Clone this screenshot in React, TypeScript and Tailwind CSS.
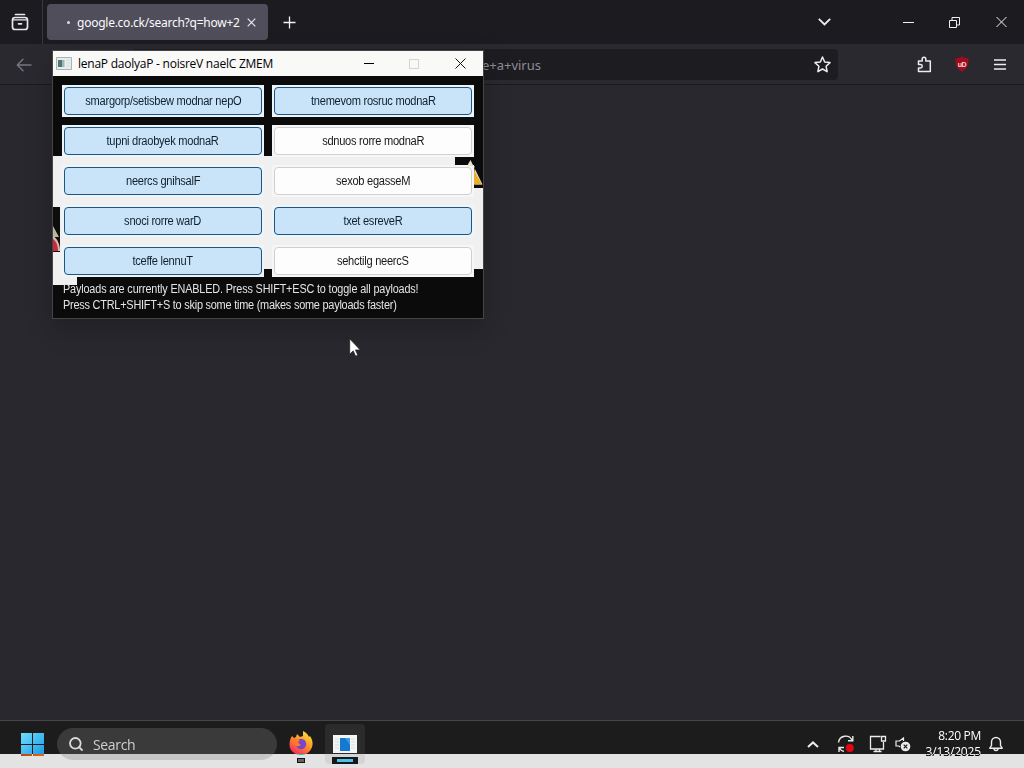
import React from 'react';
import { Search } from 'lucide-react';

type Payload = { label: string; active: boolean };

const payloads: Payload[] = [
  { label: 'smargorp/setisbew modnar nepO', active: true },
  { label: 'tnemevom rosruc modnaR', active: true },
  { label: 'tupni draobyek modnaR', active: true },
  { label: 'sdnuos rorre modnaR', active: false },
  { label: 'neercs gnihsalF', active: true },
  { label: 'sexob egasseM', active: false },
  { label: 'snoci rorre warD', active: true },
  { label: 'txet esreveR', active: true },
  { label: 'tceffe lennuT', active: true },
  { label: 'sehctilg neercS', active: false },
];

const TabStrip: React.FC = () => (
  <div className="flex h-11 items-center bg-[#1c1b20] text-[#fbfbfe]">
    <div className="flex h-full w-[43px] items-center justify-center border-r border-[#38373d] pr-[3px]">
      <svg width="18" height="18" viewBox="0 0 18 18" fill="none" stroke="#e8e8ee" strokeWidth="1.7" strokeLinecap="round">
        <path d="M4.5 1.500h9" />
        <rect x="1.500" y="4.500" width="15" height="12" rx="2.600" />
        <path d="M2 6.800h14" strokeWidth="1.200" />
        <path d="M7.500 10.800h3" />
      </svg>
    </div>
    <div className="ml-1 flex h-9 w-[221px] items-center rounded bg-[#504e5a]">
      <span className="ml-5 h-[3px] w-[3px] rounded-full bg-[#dcdce2]" />
      <span className="ml-[7px] w-[166px] whitespace-nowrap pt-px font-['Noto_Sans',sans-serif] text-[12px] tracking-[-0.25px]">
        google.co.ck/search?q=how+2
      </span>
      <svg className="ml-1" width="9" height="9" viewBox="0 0 9 9" stroke="#e8e8ee" strokeWidth="1.2">
        <path d="M.7.7l7.6 7.6M8.3.7L.7 8.3" />
      </svg>
    </div>
    <svg className="ml-[15px]" width="13" height="13" viewBox="0 0 13 13" stroke="#f2f2f6" strokeWidth="1.3">
      <path d="M6.5.5v12M.5 6.5h12" />
    </svg>
    <div className="ml-auto flex items-center">
      <svg className="mr-[72px]" width="13" height="8" viewBox="0 0 13 8" fill="none" stroke="#ececf1" strokeWidth="1.800">
        <path d="M.8.8l5.700 5.700L12.200.8" />
      </svg>
      <span className="mr-[35px] h-px w-[11px] bg-[#f0f0f4]" />
      <svg className="mr-[36px]" width="11" height="11" viewBox="0 0 11 11" fill="none" stroke="#f0f0f4">
        <path d="M.5 3.500h7v7h-7zM3 3V.5h7.500v7.500H8" />
      </svg>
      <svg className="mr-[17px]" width="11" height="12" viewBox="0 0 11 12" stroke="#f0f0f4" strokeWidth="1">
        <path d="M.5 1l10 10M10.500 1L.5 11" />
      </svg>
    </div>
  </div>
);

const NavBar: React.FC = () => (
  <div className="flex h-[41px] items-center border-b border-[#1b1a1f] bg-[#2a2930]">
    <svg className="ml-4 mt-px" width="16" height="14" viewBox="0 0 16 14" fill="none" stroke="#77767d" strokeWidth="1.4" strokeLinecap="round" strokeLinejoin="round">
      <path d="M15 7H1.500M7 1.300L1.300 7 7 12.700" />
    </svg>
    <div className="ml-[100px] flex h-[31px] w-[706px] items-center justify-end rounded bg-[#1d1c21] pr-[7px] pt-px">
      <span className="mr-[273px] pt-[3px] font-['Noto_Sans',sans-serif] text-[13px] text-[#8e8d94]">virus+on+my+machine+a+virus</span>
      <svg width="17" height="17" viewBox="0 0 17 17" fill="none" stroke="#ececf1" strokeWidth="1.500" strokeLinejoin="round">
        <path d="M8.500 1l2.200 5 5.300.6-3.900 3.700 1 5.400-4.600-2.700-4.600 2.700 1-5.400L1 6.600 6.300 6z" />
      </svg>
    </div>
    <svg className="ml-[79px]" width="15" height="17" viewBox="0 0 15 17" fill="none" stroke="#ececf1" strokeWidth="1.500" strokeLinejoin="round">
      <path d="M1.500 5h3.700V3a1.800 1.800 0 0 1 3.600 0v2h4.500V15.500H1.500v-3.500H3.500a1.700 1.700 0 0 0 0-3.400H1.500z" />
    </svg>
    <div className="relative ml-[22px] flex h-4 w-4 items-center justify-center">
      <svg className="absolute inset-0" width="16" height="16" viewBox="0 0 16 16" fill="#9d0d1b">
        <path d="M8 .3c2 1.400 4 1.900 6.500 2.100C14.800 8 13.500 12.500 8 15.800 2.500 12.500 1.200 8 1.500 2.400 4 2.200 6 1.700 8 .3z" />
      </svg>
      <span className="relative font-['Liberation_Sans',sans-serif] text-[7px] font-bold leading-none tracking-[-0.5px] text-[#ffd6d9]">uD</span>
    </div>
    <svg className="ml-6" width="12" height="11" viewBox="0 0 12 11" stroke="#ececf1" strokeWidth="1.400">
      <path d="M0 1h12M0 5.500h12M0 10h12" />
    </svg>
  </div>
);

const PayloadButton: React.FC<Payload> = ({ label, active }) => (
  <div className={`h-8 p-0.5 ${active ? 'bg-[#eef5fa]' : 'bg-[#f6f6f6]'}`}>
    <button
      className={`block h-7 w-full whitespace-nowrap rounded border text-center text-[12px] leading-[26px] tracking-[-0.3px] ${
        active ? 'border-[#1d5583] bg-[#c9e4f8] text-[#10202e]' : 'border-[#d0d0d0] bg-[#fdfdfd] text-[#181818]'
      }`}
    >
      <span className="inline-block scale-x-[0.925]">{label}</span>
    </button>
  </div>
);

const PayloadWindow: React.FC = () => (
  <div className="absolute left-[52px] top-[50px] h-[269px] w-[432px] border border-[#454545] bg-[#0b0b0b] font-['Liberation_Sans',sans-serif] shadow-[0_10px_26px_rgba(0,0,0,0.22)]">
    <div className="flex h-[25px] items-center bg-[#f9f9f8] text-black">
      <svg className="ml-[3px]" width="16" height="13" viewBox="0 0 16 13">
        <path d="M.5.5h15v12H.5z" fill="#e9ecec" stroke="#a9b3b3" />
        <path d="M2 3h5v7H2z" fill="#4f7775" />
        <path d="M6 3h2.500v7H6z" fill="#9eb9b6" />
        <path d="M11 3h3M11 6h3M11 9h3" stroke="#d3dada" />
      </svg>
      <span className="ml-[6px] whitespace-nowrap font-['Open_Sans',sans-serif] text-[12px] tracking-[-0.24px]">
        lenaP daolyaP - noisreV naelC ZMEM
      </span>
      <div className="ml-auto flex items-center">
        <span className="h-px w-[10px] bg-black" />
        <span className="ml-[35px] h-[10px] w-[10px] border border-[#d4d4d4]" />
        <svg className="ml-[36px] mr-[17px]" width="11" height="11" viewBox="0 0 11 11" stroke="#111">
          <path d="M.5.5l10 10M10.500.5L.5 10.500" />
        </svg>
      </div>
    </div>

    {/* patches where the client area has been repainted */}
    <div className="absolute left-0 top-[105px] h-[113px] w-full bg-[#f0f0f0]" />
    <div className="absolute left-0 top-[218px] h-4 w-6 bg-[#f0f0f0]" />
    <div className="absolute left-0 top-[156px] h-[45px] w-[7px] bg-[#0d0d0d]" />
    <div className="absolute left-[402px] top-[106px] h-2 w-7 bg-[#0b0b0b]" />
    <div className="absolute right-0 top-[105px] h-8 w-[9px] bg-[#0b0b0b]" />

    <div className="relative mt-[9px] grid grid-cols-[202px_202px] gap-2 pl-[9px]">
      {payloads.map((payload) => (
        <PayloadButton key={payload.label} {...payload} />
      ))}
    </div>
    <div className="absolute left-[402px] top-[106px] h-2 w-5 bg-[#0b0b0b]" />
    <div className="relative mt-1 whitespace-nowrap pl-[10px] text-[12px] leading-4 text-[#e4e4e4]">
      <p className="origin-left scale-x-[0.901] tracking-[-0.15px]">Payloads are currently ENABLED. Press SHIFT+ESC to toggle all payloads!</p>
      <p className="origin-left scale-x-[0.91] tracking-[-0.25px]">Press CTRL+SHIFT+S to skip some time (makes some payloads faster)</p>
    </div>

    {/* stray warning and error icons */}
    <svg className="absolute left-[413px] top-[108px]" width="17" height="30" viewBox="0 0 17 30">
      <path d="M8 26h9v2.500H8z" fill="#0b0b0b" />
      <path d="M4.500 1L1 7h7.500v18.500h8z" fill="#e8e4cf" />
      <path d="M8 11l8 14.500H8z" fill="#e6b02d" />
    </svg>
    <svg className="absolute left-0 top-[172px]" width="8" height="30" viewBox="0 0 8 30">
      <path d="M0 3l6 11H0z" fill="#b9b79c" />
      <path d="M0 13c4 2 7 8 7 15H0z" fill="#e0b5b5" />
      <path d="M0 16c3 2 5 6 5 12H0z" fill="#c12f3b" />
    </svg>
  </div>
);

const TrayIcons: React.FC = () => (
  <div className="flex h-[46px] items-center">
    <svg className="mr-[18px]" width="12" height="7" viewBox="0 0 12 7" fill="none" stroke="#ececec" strokeWidth="2">
      <path d="M1 6l5-4.600L11 6" />
    </svg>
    <svg className="mr-[14px]" width="18" height="18" viewBox="0 0 18 18" fill="none" stroke="#ececec" strokeWidth="1.400">
      <path d="M1.500 7.500A7.200 7.200 0 0 1 15 5M15.800 1v4.800H11M2 17v-4.500H7M2 12.500c1 2 3 3.500 5 3.900" />
      <circle cx="12.800" cy="13" r="4" fill="#e30613" stroke="none" />
    </svg>
    <svg className="mr-[8px]" width="18" height="18" viewBox="0 0 18 18" fill="none" stroke="#ececec" strokeWidth="1.300">
      <path d="M11.500 1.500H1.500v12.500H14.500V7M4.500 16.500h8M7 14v2.500M10.500 14v2.500M12.500 1.500h4v4.500h-4z" />
    </svg>
    <svg className="mr-[15px]" width="16" height="16" viewBox="0 0 16 16" fill="none" stroke="#ececec" strokeWidth="1.200">
      <path d="M8.500 5V2L4.500 5H1v5h3l1 1" />
      <circle cx="10.500" cy="10.500" r="4.800" fill="#ececec" stroke="none" />
      <path d="M8.700 8.700l3.600 3.600M12.300 8.700l-3.600 3.600" stroke="#1c1c1c" />
    </svg>
  </div>
);

const FirefoxIcon: React.FC = () => (
  <svg width="24" height="24" viewBox="0 0 24 24">
    <defs>
      <linearGradient id="flame" x1="0.8" y1="0" x2="0.2" y2="1">
        <stop offset="0" stopColor="#ffe63d" />
        <stop offset=".45" stopColor="#ff9626" />
        <stop offset="1" stopColor="#f3215c" />
      </linearGradient>
    </defs>
    <path d="M3 5l2 2 2-1 1-3 3 3 3-1V0c4 2 5 4 6 6l1-1c2 3 3 6 2.500 9C22.500 20 18 24 12 24 5.500 24 .5 19.500.5 13.500.5 10 1.500 7 3 5z" fill="url(#flame)" />
    <circle cx="12" cy="13" r="5.200" fill="#7a46c8" />
    <path d="M4 8c3-1 5-.5 7 2-2 0-2 1.500-1 2.500s1 1 2 .8c-1 2-4 2.700-6 .7C5 13 4 11 4 8z" fill="#ff7d2a" />
  </svg>
);

const Taskbar: React.FC = () => (
  <div className="relative isolate flex h-12 items-start overflow-hidden border-t border-[#46454a] bg-[#1c1c1c] font-['Open_Sans',sans-serif] text-white">
    <svg className="ml-[21px] mt-3" width="23" height="23" viewBox="0 0 23 23">
      <defs>
        <linearGradient id="logo" x1="0" y1="0" x2="1" y2="1">
          <stop offset="0" stopColor="#72dcfb" />
          <stop offset="1" stopColor="#159be6" />
        </linearGradient>
      </defs>
      <path d="M0 0h11v11H0zM12 0h11v11H12zM0 12h11v11H0zM12 12h11v11H12z" fill="url(#logo)" />
    </svg>
    <div className="ml-[13px] mt-[7px] flex h-8 w-[220px] items-center rounded-full bg-[#3a3a3a] pl-[11px]">
      <Search size={16} strokeWidth={2.7} className="text-[#dadada]" />
      <span className="ml-[9px] text-[14px] tracking-[-0.35px] text-[#cfcfcf]">Search</span>
    </div>
    <div className="ml-3 mt-[10px] w-6">
      <FirefoxIcon />
    </div>
    <div className="ml-3 mt-[3px] flex h-10 w-10 justify-center rounded bg-[#2b2b2b] pt-[11px]">
      <svg width="24" height="18" viewBox="0 0 24 18">
        <path d="M0 0h24v18H0z" fill="#f3f5f7" />
        <path d="M2 4h4M2 7h4M2 10h4M2 13h4M18 4h4M18 7h4M18 10h4M18 13h4" stroke="#d3dbe0" />
        <path d="M7 3h10v13H7z" fill="#1479cf" />
        <path d="M12 3h5v7z" fill="#3b9be6" />
      </svg>
    </div>
    <div className="ml-auto flex">
      <TrayIcons />
      <div className="-ml-[2px] mt-[7px] w-[57px] whitespace-nowrap text-right text-[12px] leading-4">
        <div className="tracking-[-0.3px]">8:20 PM</div>
        <div className="tracking-[-0.15px]">3/13/2025</div>
      </div>
      <svg className="ml-[8px] mr-[21px] mt-[15px]" width="14" height="16" viewBox="0 0 14 16" fill="none" stroke="#ececec" strokeWidth="1.400" strokeLinejoin="round">
        <path d="M2.500 9.500V6a4.500 4.500 0 0 1 9 0v3.500l1.700 2.700H.8zM5 12.500a2 2 0 0 0 4 0" />
      </svg>
    </div>

    {/* inverted band along the bottom edge */}
    <div className="absolute inset-x-0 bottom-0 h-[14px] bg-white mix-blend-difference" />
    <div className="absolute bottom-[5px] left-[297px] h-[5px] w-2 border border-[#141414] bg-[#666]" />
    <div className="absolute bottom-1 left-[332px] flex h-[7px] w-[26px] items-center justify-center bg-[#14191b]">
      <span className="h-[3px] w-4 bg-[#4cc2e8]" />
    </div>
  </div>
);

export default function App() {
  return (
    <div className="relative flex h-[768px] w-[1024px] flex-col overflow-hidden bg-[#29282e]">
      <TabStrip />
      <NavBar />
      <div className="flex-1" />
      <Taskbar />
      <PayloadWindow />
      <svg className="absolute left-[349px] top-[338px]" width="12" height="19" viewBox="0 0 12 19">
        <path d="M.7.8v15.400l3.500-3.300 2.400 5.300 2.300-1-2.400-5.200h4.800z" fill="#fff" stroke="#222" strokeWidth=".8" />
      </svg>
    </div>
  );
}
